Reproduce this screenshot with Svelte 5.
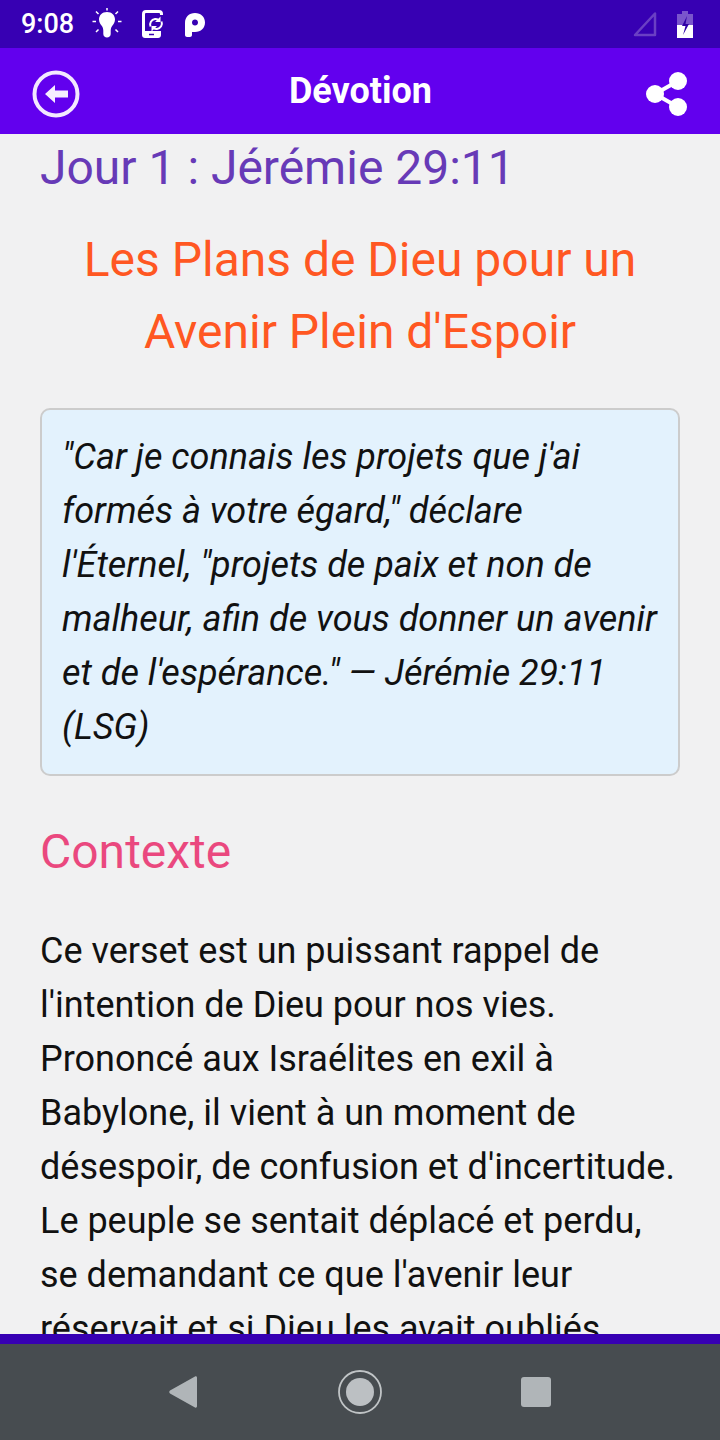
<script>
	const paragraph = [
		'Ce verset est un puissant rappel de',
		"l'intention de Dieu pour nos vies.",
		'Prononcé aux Israélites en exil à',
		'Babylone, il vient à un moment de',
		"désespoir, de confusion et d'incertitude.",
		'Le peuple se sentait déplacé et perdu,',
		"se demandant ce que l'avenir leur",
		'réservait et si Dieu les avait oubliés.'
	];
	const verse = [
		'"Car je connais les projets que j\'ai',
		'formés à votre égard," déclare',
		'l\'Éternel, "projets de paix et non de',
		'malheur, afin de vous donner un avenir',
		'et de l\'espérance." — Jérémie 29:11',
		'(LSG)'
	];
</script>

<div class="screen">
	<div class="status-bar">
		<div class="status-left">
			<span class="time">9:08</span>
			<svg class="ic-bulb" width="30" height="32" viewBox="0 0 30 32" fill="none">
				<path d="M15 4C10 4 7 7.500 7 11.500c0 3 1.600 4.700 2.900 6.600.9 1.300 1.300 2.600 1.400 4.400v3.500c0 2 1.700 3.500 3.700 3.500s3.700-1.500 3.700-3.500v-3.500c.1-1.800.5-3.100 1.400-4.400C21.400 16.200 23 14.500 23 11.500 23 7.500 20 4 15 4z" fill="#fff"/>
				<path d="M15 0v2.500M0.500 13.500h3.500M26 13.500h3.500M4 3.500l2.500 2.500M26 3.500l-2.500 2.500M4 24l2.500-2.500M26 24l-2.500-2.500" stroke="#fff" stroke-width="1.500"/>
			</svg>
			<svg class="ic-phone" width="22" height="28" viewBox="0 0 22 28" fill="none">
				<path d="M19.500 5V4c0-1.400-1.100-2.500-2.500-2.500H4C2.600 1.500 1.500 2.600 1.500 4v20" stroke="#fff" stroke-width="3"/>
				<path d="M0 21h19v4c0 1.700-1.300 3-3 3H3c-1.700 0-3-1.300-3-3z" fill="#fff"/>
				<path d="M7 24.500h5" stroke="#3700b3" stroke-width="1.500"/>
				<path d="M8.500 16.500c-1.300-3.300.8-7 4.500-7.500 1.300-.1 2.400.2 3.300.9" stroke="#fff" stroke-width="2"/>
				<path d="M19.500 11.500c1.300 3.300-.8 7-4.500 7.500-1.300.1-2.400-.2-3.300-.9" stroke="#fff" stroke-width="2"/>
				<path d="M18.500 6.500v5.500H13zM9.500 21.500V16H15z" fill="#fff"/>
			</svg>
			<svg class="ic-p" width="20" height="24" viewBox="0 0 20 24">
				<path fill-rule="evenodd" d="M0 10C0 4 4 0 10 0s10 4 10 9.500S16 19 10 19H7v3c0 1-1 2-2 2H2c-1 0-2-1-2-2zM7 9.500c0 1.700 1.300 3 3 3s3-1.300 3-3-1.300-3-3-3-3 1.300-3 3z" fill="#fff"/>
			</svg>
		</div>
		<div class="status-right">
			<svg width="24" height="26" viewBox="0 0 24 26" fill="none">
				<path d="M22 2.500V24H2z" stroke="#6a3fc4" stroke-width="2.500" stroke-linejoin="round"/>
			</svg>
			<svg width="16" height="27" viewBox="0 0 16 27">
				<path d="M5 0h6v3h5v11H0V3h5z" fill="#7a55cc"/>
				<rect x="0" y="14" width="16" height="13" fill="#fff"/>
				<path d="M10 5 5 15h3.500L6 24l6-11H8.500z" fill="#2f00a6"/>
			</svg>
		</div>
	</div>

	<header class="toolbar">
		<svg class="back" width="48" height="48" viewBox="0 0 48 48" fill="none">
			<circle cx="24" cy="24" r="21.500" stroke="#f3e9ff" stroke-width="4"/>
			<path d="M13 24 23 15v5.500h13v7H23V33z" fill="#f6efff"/>
		</svg>
		<h1>Dévotion</h1>
		<svg class="share" width="44" height="48" viewBox="0 0 44 48" fill="none">
			<path d="M33 11 10 24l23 13" stroke="#fff" stroke-width="4"/>
			<circle cx="33" cy="11" r="9" fill="#fff"/>
			<circle cx="10" cy="24" r="9" fill="#fff"/>
			<circle cx="33" cy="37" r="9" fill="#fff"/>
		</svg>
	</header>

	<main class="content">
		<h2 class="day">Jour 1 : Jérémie 29:11</h2>
		<h3 class="title">Les Plans de Dieu pour un<br />Avenir Plein d'Espoir</h3>
		<blockquote class="verse">
			{#each verse as line}
				<div>{line}</div>
			{/each}
		</blockquote>
		<h3 class="section">Contexte</h3>
		<div class="body-text">
			{#each paragraph as line}
				<div>{line}</div>
			{/each}
		</div>
	</main>

	<div class="stripe"></div>

	<nav class="nav-bar">
		<svg width="30" height="34" viewBox="0 0 30 34">
			<path d="M27 1.500c1 -.6 2 0 2 1.200v28.600c0 1.200-1 1.800-2 1.200L2 18.500c-1-.7-1-2.300 0-3z" fill="#b0b5b8"/>
		</svg>
		<svg width="44" height="44" viewBox="0 0 44 44" fill="none">
			<circle cx="22" cy="22" r="21" stroke="#c0c4c6" stroke-width="1.800"/>
			<circle cx="22" cy="22" r="14" fill="#bcc0c3"/>
		</svg>
		<div class="square"></div>
	</nav>
</div>

<style>
	:global(body) {
		margin: 0;
		background: #f1f1f2;
	}

	.screen {
		width: 720px;
		height: 1440px;
		display: flex;
		flex-direction: column;
		overflow: hidden;
		font-family: Roboto, sans-serif;
		background: #f1f1f2;
	}

	.status-bar {
		height: 48px;
		flex: none;
		display: flex;
		justify-content: space-between;
		align-items: center;
		background: #3700b3;
		color: #fff;
		padding: 0 27px 0 21px;
	}

	.status-left {
		display: flex;
		align-items: center;
	}

	.time {
		font-size: 27px;
		font-weight: 500;
		width: 71px;
	}

	.ic-phone {
		margin-left: 20px;
	}

	.ic-p {
		margin-left: 21px;
		margin-top: 2px;
	}

	.status-right {
		display: flex;
		align-items: center;
		gap: 20px;
	}

	.toolbar {
		height: 86px;
		flex: none;
		display: flex;
		justify-content: space-between;
		align-items: center;
		background: #6200ee;
		padding: 0 31px 0 32px;
	}

	.toolbar h1 {
		margin: 0 0 0 -4px;
		font-size: 36px;
		font-weight: 700;
		color: #fff;
	}

	.back,
	.share {
		margin-top: 5px;
	}

	.content {
		flex: 1;
		min-height: 0;
		overflow: hidden;
		padding: 0 40px;
	}

	.day {
		margin: 0;
		font-size: 48px;
		font-weight: 400;
		line-height: 66px;
		color: #673ab7;
		padding-top: 1px;
	}

	.title {
		margin: 23px 0 0;
		font-size: 48px;
		font-weight: 400;
		line-height: 72px;
		text-align: center;
		color: #ff5722;
	}

	.verse {
		margin: 40px 0 0;
		height: 368px;
		box-sizing: border-box;
		padding: 20px 20px;
		background: #e3f2fd;
		border: 2px solid #cccccc;
		border-radius: 10px;
		font-size: 36px;
		font-style: italic;
		line-height: 54px;
		color: #111;
		white-space: nowrap;
	}

	.section {
		margin: 40px 0 0;
		font-size: 48px;
		font-weight: 400;
		line-height: 72px;
		color: #e91e63;
		opacity: 0.8;
	}

	.body-text {
		margin-top: 36px;
		font-size: 36px;
		line-height: 54px;
		color: #111;
		white-space: nowrap;
	}

	.stripe {
		height: 10px;
		flex: none;
		background: #3700b3;
	}

	.nav-bar {
		height: 96px;
		flex: none;
		background: #474c50;
		display: flex;
		align-items: center;
		padding: 0 169px 0 168px;
		justify-content: space-between;
	}

	.square {
		width: 30px;
		height: 30px;
		border-radius: 3px;
		background: #b0b5b8;
	}
</style>
